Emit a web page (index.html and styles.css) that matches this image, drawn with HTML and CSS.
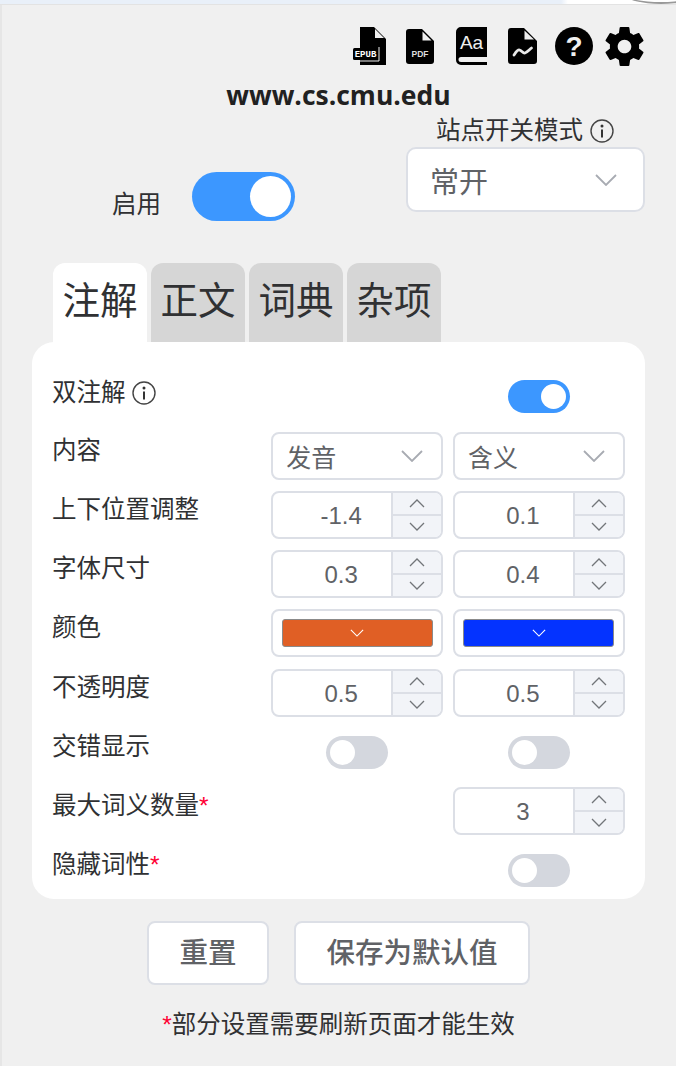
FILE: index.html
```html
<!DOCTYPE html>
<html lang="zh">
<head>
<meta charset="utf-8">
<title>设置</title>
<link rel="stylesheet" href="styles.css">
</head>
<body>
<div class="topstrip"></div>
<div class="page">
  <div class="icons">
    <svg class="ic ic-epub" viewBox="0 0 33 38"><path d="M7 0H21L33 12V38H7Z" fill="#000"/><path d="M22 2V11H31Z" fill="#f0f0f0"/><path d="M26 20V34H3" fill="none" stroke="#f0f0f0" stroke-width="1"/><rect x="0" y="21" width="25" height="12" rx="1.500" fill="#000"/><text x="12.500" y="30" class="t-epub">EPUB</text></svg>
    <svg class="ic ic-pdf" viewBox="0 0 28 35"><path d="M3 0H16L28 12V32a3 3 0 0 1-3 3H3a3 3 0 0 1-3-3V3a3 3 0 0 1 3-3Z" fill="#000"/><path d="M16.500 2.500V11.500H25.500Z" fill="#f0f0f0"/><text x="14" y="28" class="t-pdf">PDF</text></svg>
    <svg class="ic ic-dict" viewBox="0 0 31 38"><path d="M5 0H31V30H5a2.500 2.500 0 0 0 0 5H31V38H5a5 5 0 0 1-5-5V5a5 5 0 0 1 5-5Z" fill="#000"/><text x="15.500" y="22" class="t-aa">Aa</text></svg>
    <svg class="ic ic-stat" viewBox="0 0 29 36"><path d="M3 0H16L29 13V33a3 3 0 0 1-3 3H3a3 3 0 0 1-3-3V3a3 3 0 0 1 3-3Z" fill="#000"/><path d="M16.500 2.500V11.500H26Z" fill="#f0f0f0"/><path d="M6 27C8 24 9.500 21.500 11.500 22S15 25.500 17 25 21 22 23.500 20" fill="none" stroke="#e8e8e8" stroke-width="2.800" stroke-linecap="round"/></svg>
    <svg class="ic ic-help" viewBox="0 0 38 38"><circle cx="19" cy="19" r="19" fill="#000"/><text x="19" y="29" class="t-q">?</text></svg>
    <svg class="ic ic-gear" viewBox="2.300 2 19.400 20"><path fill="#000" d="M19.430 12.980c.04-.32.070-.64.070-.98s-.03-.66-.07-.98l2.110-1.650c.19-.15.240-.42.120-.64l-2-3.460c-.12-.22-.39-.3-.61-.22l-2.490 1c-.52-.4-1.080-.73-1.690-.98l-.38-2.650A.488.488 0 0 0 14 2h-4c-.25 0-.46.18-.49.420l-.38 2.650c-.61.25-1.170.59-1.690.98l-2.490-1c-.23-.09-.49 0-.61.220l-2 3.460c-.13.220-.07.490.12.640l2.110 1.650c-.04.320-.07.650-.07.980s.03.660.07.980l-2.110 1.650c-.19.150-.24.420-.12.640l2 3.460c.12.220.39.300.61.220l2.490-1c.52.400 1.080.730 1.690.980l.38 2.650c.03.240.240.420.490.420h4c.250 0 .460-.180.490-.420l.38-2.650c.610-.250 1.170-.590 1.690-.980l2.490 1c.230.090.490 0 .610-.220l2-3.460c.120-.220.070-.490-.120-.640l-2.110-1.650zM12 15.500c-1.930 0-3.500-1.570-3.500-3.500s1.570-3.500 3.500-3.500 3.500 1.570 3.500 3.500-1.570 3.500-3.500 3.500z"/></svg>
  </div>
  <div class="site">www.cs.cmu.edu</div>
  <div class="head">
    <div class="enable">
      <span class="enable-label">启用</span>
      <span class="switch switch-lg on"><i></i></span>
    </div>
    <div class="mode">
      <div class="mode-label">站点开关模式 <svg class="info info-lg" viewBox="0 0 24 24"><circle cx="12" cy="12" r="11" fill="none" stroke="#444" stroke-width="1.400"/><circle cx="12" cy="7" r="1.500" fill="#333"/><rect x="11" y="10.500" width="2" height="8" fill="#333"/></svg></div>
      <div class="select select-lg"><span>常开</span><svg class="chev" viewBox="0 0 22 12"><path d="M1 1l10 10L21 1"/></svg></div>
    </div>
  </div>
  <div class="tabs">
    <div class="tab active">注解</div>
    <div class="tab">正文</div>
    <div class="tab">词典</div>
    <div class="tab">杂项</div>
  </div>
  <div class="card">
    <div class="row row-first">
      <div class="label">双注解 <svg class="info" viewBox="0 0 24 24"><circle cx="12" cy="12" r="11" fill="none" stroke="#444" stroke-width="1.400"/><circle cx="12" cy="7" r="1.500" fill="#333"/><rect x="11" y="10.500" width="2" height="8" fill="#333"/></svg></div>
      <div class="cell"></div>
      <div class="cell"><span class="switch on"><i></i></span></div>
    </div>
    <div class="row">
      <div class="label">内容</div>
      <div class="cell"><div class="select"><span>发音</span><svg class="chev" viewBox="0 0 22 12"><path d="M1 1l10 10L21 1"/></svg></div></div>
      <div class="cell"><div class="select"><span>含义</span><svg class="chev" viewBox="0 0 22 12"><path d="M1 1l10 10L21 1"/></svg></div></div>
    </div>
    <div class="row">
      <div class="label">上下位置调整</div>
      <div class="cell"><div class="num"><span class="val">-1.4</span><span class="steps"><b><svg viewBox="0 0 16 9"><path d="M1 8l7-7 7 7"/></svg></b><b><svg viewBox="0 0 16 9"><path d="M1 1l7 7 7-7"/></svg></b></span></div></div>
      <div class="cell"><div class="num"><span class="val">0.1</span><span class="steps"><b><svg viewBox="0 0 16 9"><path d="M1 8l7-7 7 7"/></svg></b><b><svg viewBox="0 0 16 9"><path d="M1 1l7 7 7-7"/></svg></b></span></div></div>
    </div>
    <div class="row">
      <div class="label">字体尺寸</div>
      <div class="cell"><div class="num"><span class="val">0.3</span><span class="steps"><b><svg viewBox="0 0 16 9"><path d="M1 8l7-7 7 7"/></svg></b><b><svg viewBox="0 0 16 9"><path d="M1 1l7 7 7-7"/></svg></b></span></div></div>
      <div class="cell"><div class="num"><span class="val">0.4</span><span class="steps"><b><svg viewBox="0 0 16 9"><path d="M1 8l7-7 7 7"/></svg></b><b><svg viewBox="0 0 16 9"><path d="M1 1l7 7 7-7"/></svg></b></span></div></div>
    </div>
    <div class="row">
      <div class="label">颜色</div>
      <div class="cell"><div class="color"><span class="swatch swatch-orange"><svg viewBox="0 0 16 9"><path d="M1 1l7 7 7-7"/></svg></span></div></div>
      <div class="cell"><div class="color"><span class="swatch swatch-blue"><svg viewBox="0 0 16 9"><path d="M1 1l7 7 7-7"/></svg></span></div></div>
    </div>
    <div class="row">
      <div class="label">不透明度</div>
      <div class="cell"><div class="num"><span class="val">0.5</span><span class="steps"><b><svg viewBox="0 0 16 9"><path d="M1 8l7-7 7 7"/></svg></b><b><svg viewBox="0 0 16 9"><path d="M1 1l7 7 7-7"/></svg></b></span></div></div>
      <div class="cell"><div class="num"><span class="val">0.5</span><span class="steps"><b><svg viewBox="0 0 16 9"><path d="M1 8l7-7 7 7"/></svg></b><b><svg viewBox="0 0 16 9"><path d="M1 1l7 7 7-7"/></svg></b></span></div></div>
    </div>
    <div class="row row-toggle">
      <div class="label">交错显示</div>
      <div class="cell"><span class="switch"><i></i></span></div>
      <div class="cell"><span class="switch"><i></i></span></div>
    </div>
    <div class="row">
      <div class="label">最大词义数量<em>*</em></div>
      <div class="cell"></div>
      <div class="cell"><div class="num"><span class="val">3</span><span class="steps"><b><svg viewBox="0 0 16 9"><path d="M1 8l7-7 7 7"/></svg></b><b><svg viewBox="0 0 16 9"><path d="M1 1l7 7 7-7"/></svg></b></span></div></div>
    </div>
    <div class="row row-toggle row-last">
      <div class="label">隐藏词性<em>*</em></div>
      <div class="cell"></div>
      <div class="cell"><span class="switch"><i></i></span></div>
    </div>
  </div>
  <div class="actions">
    <button class="btn">重置</button>
    <button class="btn">保存为默认值</button>
  </div>
  <div class="note"><em>*</em>部分设置需要刷新页面才能生效</div>
</div>
</body>
</html>
```
FILE: styles.css
```css
* { box-sizing: border-box; }
html, body { margin: 0; padding: 0; }
body {
  width: 676px;
  height: 1066px;
  overflow: hidden;
  background: #f0f0f0;
  box-shadow: inset 2px 0 0 #e6e6e6;
  color: #303133;
  font-family: "Liberation Sans", "Noto Sans CJK SC", sans-serif;
  font-size: 24.500px;
}
.topstrip { position: relative; height: 5px; overflow: hidden; background: linear-gradient(90deg, #e9f0f9 0, #e9f0f9 83%, #fff 84%); border-bottom: 1px solid #e3e3e3; }
.topstrip::after { content: ""; position: absolute; left: 626px; top: -14px; width: 70px; height: 16px; border-radius: 50%; background: #fff; border-bottom: 2px solid #999; }
.page { padding: 0 31px 0 32px; }
.icons { display: flex; justify-content: flex-end; align-items: center; height: 38px; margin-top: 22px; margin-right: 1px; }
.ic { display: block; flex: none; }
.ic-epub { width: 33px; height: 38px; }
.ic-pdf { width: 28px; height: 35px; margin-left: 20px; }
.ic-dict { width: 31px; height: 38px; margin-left: 22px; }
.ic-stat { width: 29px; height: 36px; margin-left: 21px; }
.ic-help { width: 38px; height: 38px; margin-left: 18px; }
.ic-gear { width: 39px; height: 39px; margin-left: 12px; }
.t-epub { font: 700 9px "Liberation Mono", monospace; fill: #fff; text-anchor: middle; }
.t-pdf { font: 700 8.500px "Liberation Sans", sans-serif; fill: #ddd; text-anchor: middle; }
.t-aa { font: 400 19px "Liberation Sans", sans-serif; fill: #eee; text-anchor: middle; }
.t-q { font: 700 28px "Liberation Sans", sans-serif; fill: #f0f0f0; text-anchor: middle; }
.site { margin-top: 14px; text-align: center; font-size: 26.500px; font-weight: 700; line-height: 32px; color: #212121; font-family: "Open Sans", sans-serif; }
.head { display: flex; justify-content: space-between; align-items: flex-end; height: 95px; margin-top: 6px; }
.enable { display: flex; align-items: center; gap: 31px; padding-left: 80px; margin-bottom: -9px; }
.enable-label { line-height: 32px; padding-top: 16px; }
.mode { width: 239px; }
.mode-label { line-height: 32px; margin-left: 30px; white-space: nowrap; display: flex; align-items: center; gap: 7px; }
.info { width: 24px; height: 24px; display: inline-block; }
.select { display: flex; align-items: center; justify-content: space-between; height: 48px; padding: 0 18px 0 13px; background: #fff; border: 2px solid #dcdfe6; border-radius: 8px; color: #606266; font-size: 25px; }
.select-lg { height: 65px; padding: 0 26px 0 22px; border-radius: 10px; font-size: 29px; }
.chev { width: 22px; height: 12px; fill: none; stroke: #a8abb2; stroke-width: 1.800; }
.switch { display: block; position: relative; width: 62px; height: 33px; border-radius: 17px; background: #d4d7de; }
.switch i { position: absolute; left: 4px; top: 4px; width: 25px; height: 25px; border-radius: 50%; background: #fff; }
.switch.on { background: #3c97ff; }
.switch.on i { left: 33px; }
.switch-lg { width: 103px; height: 49px; border-radius: 25px; }
.switch-lg i { width: 41px; height: 41px; }
.switch-lg.on i { left: 58px; }
.tabs { display: flex; gap: 4px; padding-left: 21px; margin-top: 51px; }
.tab { width: 94px; height: 79px; padding-top: 15px; text-align: center; font-size: 37.500px; line-height: 46px; background: #d6d6d6; border-radius: 12px 12px 0 0; color: #303133; }
.tab.active { background: #fff; }
.card { background: #fff; border-radius: 22px; padding: 16px 20px 0 20px; }
.row { display: grid; grid-template-columns: 209.100px 171.600px 171.600px; column-gap: 10.200px; height: 59.170px; }
.label { line-height: 38px; white-space: nowrap; display: flex; align-items: flex-start; }
.label .info { margin: 7px 0 0 6px; }
.label em, .note em { font-style: normal; color: #f03; }
.cell { display: flex; justify-content: center; align-items: flex-start; }
.row-first { height: 74px; }
.row-first .label { padding-top: 16px; }
.row-first .cell { padding-top: 22px; }
.row-toggle .cell { padding-top: 8px; }
.row-last { height: 53px; }
.cell .select, .num, .color { width: 100%; }
.num { display: flex; height: 48px; background: #fff; border: 2px solid #dcdfe6; border-radius: 8px; overflow: hidden; color: #606266; font-size: 24px; }
.val { flex: 1; padding-left: 18px; text-align: center; line-height: 45px; }
.steps { width: 50px; display: flex; flex-direction: column; border-left: 2px solid #dcdfe6; background: #f2f4f8; }
.steps b { flex: 1; display: flex; align-items: center; justify-content: center; }
.steps b + b { border-top: 2px solid #dcdfe6; }
.steps svg, .swatch svg { width: 16px; height: 9px; fill: none; stroke: #727579; stroke-width: 1.300; }
.color { display: flex; align-items: center; justify-content: center; height: 48px; background: #fff; border: 2px solid #dcdfe6; border-radius: 8px; }
.swatch { display: flex; align-items: center; justify-content: center; width: 151px; height: 28px; border: 1.500px solid #8a8a8a; border-radius: 3px; }
.swatch svg { width: 14px; height: 8px; stroke: #fff; }
.swatch-orange { background: #e05f25; }
.swatch-blue { background: #0433ff; }
.actions { display: flex; justify-content: center; gap: 25px; margin-top: 22px; }
.btn { height: 64px; padding: 0 30.500px 6px; background: #fff; border: 2px solid #dcdfe6; border-radius: 8px; font: 500 28.500px "Liberation Sans", "Noto Sans CJK SC", sans-serif; color: #606266; }
.note { margin-top: 21px; text-align: center; line-height: 38px; color: #303133; }
```
